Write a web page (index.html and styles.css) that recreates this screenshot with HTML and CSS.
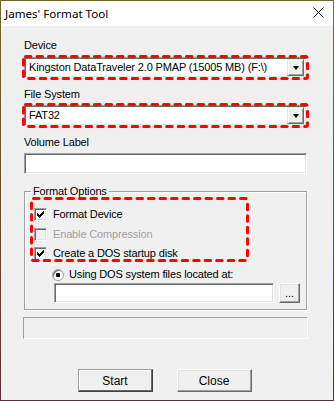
FILE: index.html
```html
<!DOCTYPE html>
<html lang="en">
<head>
    <meta charset="UTF-8">
    <title>James' Format Tool</title>
    <link rel="stylesheet" href="styles.css">
</head>
<body>
    <div class="window">
        <div class="titlebar">
            <span class="title">James' Format Tool</span>
            <svg class="close" width="11" height="11" viewBox="0 0 11 11">
                <path d="M0.5 0.5 L10.5 10.5 M10.5 0.5 L0.5 10.5" stroke="#000" stroke-width="1" fill="none"/>
            </svg>
        </div>

        <div class="content">
            <div class="label first">Device</div>
            <div class="mark">
                <div class="combo">
                    <span class="value">Kingston DataTraveler 2.0 PMAP (15005 MB) (F:\)</span>
                    <span class="drop"><span class="arrow"></span></span>
                </div>
                <svg class="dash outside"><rect class="dash-rect"/></svg>
            </div>

            <div class="label">File System</div>
            <div class="mark">
                <div class="combo">
                    <span class="value">FAT32</span>
                    <span class="drop"><span class="arrow"></span></span>
                </div>
                <svg class="dash outside"><rect class="dash-rect"/></svg>
            </div>

            <div class="label">Volume Label</div>
            <div class="field"></div>

            <fieldset class="group">
                <legend>Format Options</legend>
                <div class="mark options">
                    <div class="check-row">
                        <span class="check">
                            <svg class="tick" width="7" height="7" viewBox="0 0 7 7"><path d="M6 0h1v3h-1v1h-1v1h-1v1h-1v1h-1v-1h-1v-1h-1v-3h1v1h1v1h1v-1h1v-1h1z"/></svg>
                        </span>
                        <span>Format Device</span>
                    </div>
                    <div class="check-row disabled">
                        <span class="check"></span>
                        <span>Enable Compression</span>
                    </div>
                    <div class="check-row">
                        <span class="check">
                            <svg class="tick" width="7" height="7" viewBox="0 0 7 7"><path d="M6 0h1v3h-1v1h-1v1h-1v1h-1v1h-1v-1h-1v-1h-1v-3h1v1h1v1h1v-1h1v-1h1z"/></svg>
                        </span>
                        <span>Create a DOS startup disk</span>
                    </div>
                    <svg class="dash"><rect class="dash-rect"/></svg>
                </div>

                <div class="radio-row">
                    <span class="radio"></span>
                    <span>Using DOS system files located at:</span>
                </div>
                <div class="path-row">
                    <div class="field path"></div>
                    <button class="btn browse">...</button>
                </div>
            </fieldset>

            <div class="progress"></div>

            <div class="actions">
                <button class="btn default">Start</button>
                <button class="btn">Close</button>
            </div>
        </div>
    </div>
</body>
</html>
```

FILE: styles.css
```css
body {
    margin: 0;
    padding: 0;
    font-family: "Liberation Sans", Arial, sans-serif;
    font-size: 11px;
    letter-spacing: -0.15px;
    color: #000;
}

.window {
    width: 334px;
    height: 401px;
    box-sizing: border-box;
    border: 1px solid;
    border-image: linear-gradient(#75672a, #6a4a30 60%, #5a2e36) 1;
    background-color: #f0f0f0;
}

/* title bar */
.titlebar {
    height: 25px;
    background-color: #fff;
    display: flex;
    align-items: center;
    padding: 0 9px 0 4px;
}

.title {
    font-family: "Noto Sans", sans-serif;
    font-size: 11.6px;
    letter-spacing: 0;
    flex: 1;
    margin-top: -1px;
}

.close {
    display: block;
    margin-top: -2px;
}

/* dialog body */
.content {
    padding: 0 26px 0 23px;
}

.label {
    line-height: 13px;
    height: 13px;
    margin-top: 10px;
    margin-bottom: 4px;
}

.label.first {
    margin-top: 13px;
    margin-bottom: 5px;
}

.mark {
    position: relative;
}

.dash {
    position: absolute;
    top: 0;
    left: 0;
    width: 100%;
    height: 100%;
    overflow: visible;
    pointer-events: none;
}

.dash.outside {
    top: -2px;
    left: -2px;
    width: calc(100% + 4px);
    height: calc(100% + 4px);
}

.dash-rect {
    x: 1.5px;
    y: 1.5px;
    width: calc(100% - 3px);
    height: calc(100% - 3px);
    rx: 2px;
    fill: none;
    stroke: #f00;
    stroke-width: 3px;
    stroke-dasharray: 5.5 6;
    stroke-linecap: round;
}

/* sunken controls */
.combo,
.field {
    box-sizing: border-box;
    background-color: #fff;
    border: 1px solid;
    border-color: #a0a0a0 #fff #fff #a0a0a0;
    box-shadow: inset 1px 1px 0 #696969, inset -1px -1px 0 #e3e3e3;
}

.combo {
    height: 21px;
    display: flex;
    align-items: center;
    padding: 2px 2px 2px 4px;
}

.combo .value {
    flex: 1;
    white-space: nowrap;
    line-height: 13px;
}

.drop {
    width: 17px;
    height: 17px;
    box-sizing: border-box;
    background-color: #f0f0f0;
    border: 1px solid;
    border-color: #e3e3e3 #696969 #696969 #e3e3e3;
    box-shadow: inset 1px 1px 0 #fff, inset -1px -1px 0 #a0a0a0;
    display: flex;
    align-items: center;
    justify-content: center;
}

.arrow {
    width: 0;
    height: 0;
    border-left: 3.5px solid transparent;
    border-right: 3.5px solid transparent;
    border-top: 4px solid #000;
}

.field {
    height: 21px;
}

/* group box */
.group {
    margin: 11px 0 0;
    padding: 0 0 6px;
    border: 1px solid #a0a0a0;
    box-shadow: 1px 1px 0 #fff, inset 1px 1px 0 #fff;
}

.group legend {
    margin-left: 6px;
    padding: 0 2px;
    line-height: 13px;
}

.options {
    width: 219px;
    height: 65px;
    box-sizing: border-box;
    margin: -1px 0 0 5px;
    padding: 11px 0 0 4px;
}

.check-row {
    display: flex;
    align-items: center;
    gap: 6px;
    height: 13px;
    line-height: 13px;
    margin-bottom: 6.5px;
}

.check-row.disabled {
    color: #a0a0a0;
}

.check {
    width: 13px;
    height: 13px;
    box-sizing: border-box;
    background-color: #fff;
    border: 1px solid;
    border-color: #a0a0a0 #fff #fff #a0a0a0;
    box-shadow: inset 1px 1px 0 #696969, inset -1px -1px 0 #e3e3e3;
    display: flex;
    align-items: center;
    justify-content: center;
}

.tick {
    display: block;
    fill: #000;
    shape-rendering: crispEdges;
}

.disabled .check {
    background-color: #f0f0f0;
}

.radio-row {
    display: flex;
    align-items: center;
    gap: 5px;
    height: 13px;
    line-height: 13px;
    margin: 6px 0 0 27px;
}

.radio {
    width: 12px;
    height: 12px;
    box-sizing: border-box;
    border-radius: 50%;
    background: radial-gradient(circle, #000 0 2px, #fff 2.5px);
    border: 1px solid #a0a0a0;
    box-shadow: inset 1px 1px 0 #696969;
}

.path-row {
    display: flex;
    gap: 5px;
    margin: 2px 0 0 29px;
}

.field.path {
    width: 220px;
    height: 20px;
}

/* buttons */
.btn {
    font-family: "Liberation Sans", Arial, sans-serif;
    font-size: 11px;
    color: #000;
    background-color: #f0f0f0;
    border: 1px solid;
    border-color: #fff #696969 #696969 #fff;
    box-shadow: inset -1px -1px 0 #a0a0a0, inset 1px 1px 0 #e3e3e3;
    padding: 0;
    margin: 0;
    cursor: pointer;
}

.browse {
    width: 21px;
    height: 20px;
    line-height: 16px;
}

.progress {
    width: 285px;
    height: 22px;
    box-sizing: border-box;
    margin: 7px 0 0 -1px;
    border: 1px solid;
    border-color: #a0a0a0 #fff #fff #a0a0a0;
}

.actions {
    display: flex;
    justify-content: center;
    gap: 24px;
    margin: 30px 0 0 -2px;
}

.actions .btn {
    width: 75px;
    height: 23px;
    font-size: 12px;
}

.btn.default {
    border-color: #a0a0a0 #404040 #404040 #a0a0a0;
    box-shadow: inset -1px -1px 0 #696969, inset 1px 1px 0 #fff;
}
```
